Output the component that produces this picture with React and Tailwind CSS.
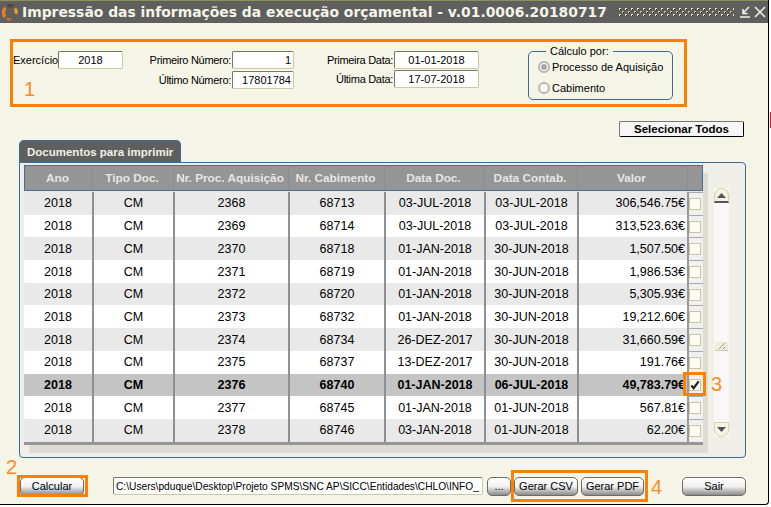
import React from "react";

const rows = [
  ["2018", "CM", "2368", "68713", "03-JUL-2018", "03-JUL-2018", "306,546.75€"],
  ["2018", "CM", "2369", "68714", "03-JUL-2018", "03-JUL-2018", "313,523.63€"],
  ["2018", "CM", "2370", "68718", "01-JAN-2018", "30-JUN-2018", "1,507.50€"],
  ["2018", "CM", "2371", "68719", "01-JAN-2018", "30-JUN-2018", "1,986.53€"],
  ["2018", "CM", "2372", "68720", "01-JAN-2018", "30-JUN-2018", "5,305.93€"],
  ["2018", "CM", "2373", "68732", "01-JAN-2018", "30-JUN-2018", "19,212.60€"],
  ["2018", "CM", "2374", "68734", "26-DEZ-2017", "30-JUN-2018", "31,660.59€"],
  ["2018", "CM", "2375", "68737", "13-DEZ-2017", "30-JUN-2018", "191.76€"],
  ["2018", "CM", "2376", "68740", "01-JAN-2018", "06-JUL-2018", "49,783.79€"],
  ["2018", "CM", "2377", "68745", "01-JAN-2018", "01-JUN-2018", "567.81€"],
  ["2018", "CM", "2378", "68746", "03-JAN-2018", "01-JUN-2018", "62.20€"],
];

const headers = ["Ano", "Tipo Doc.", "Nr. Proc. Aquisição", "Nr. Cabimento", "Data Doc.", "Data Contab.", "Valor", ""];

const gridCols = "grid grid-cols-[68px_81px_115px_96px_100px_93px_110px_16px]";

const Field = ({ value, className = "", align = "text-center", size = "text-[11px]" }) => (
  <div className={`h-[18px] bg-white border border-[#c9cba3] border-t-[#77775f] border-l-[#77775f] rounded-[2px] leading-[17px] px-[2px] text-black ${size} ${align} ${className}`}>
    {value}
  </div>
);

const Btn = ({ children, className = "" }) => (
  <button className={`h-[19px] rounded-[5px] border border-[#6b6b6b] bg-linear-to-b from-white via-[#f0f0f0] to-[#8c8c8c] text-[11px] leading-[17px] text-black ${className}`}>
    {children}
  </button>
);

const Radio = ({ on }) => (
  <span className="w-[12px] h-[12px] rounded-full border-2 border-[#b5b5b5] bg-white flex items-center justify-center shrink-0">
    {on && <span className="w-[6px] h-[6px] rounded-full bg-[#a8a8a8]" />}
  </span>
);

const Mark = ({ children, className = "" }) => (
  <span className={`absolute text-[#ff8a1e] text-[20px] leading-none font-light ${className}`}>{children}</span>
);

const Logo = () => (
  <svg width="16" height="18" viewBox="0 0 16 18" fill="none" className="shrink-0">
    <path d="M3 14 A6.5 6.5 0 0 1 3.5 5" stroke="#e8801f" strokeWidth="3.4" />
    <path d="M5.5 3 A6.5 6.5 0 0 1 11 3.2" stroke="#5a4030" strokeWidth="3" />
    <path d="M13 5.5 A6.5 6.5 0 0 1 14 11" stroke="#e8a020" strokeWidth="3" />
    <path d="M4.5 15.5 A6.5 6.5 0 0 0 9 16" stroke="#c87020" strokeWidth="2.4" />
  </svg>
);

const Grip = () => (
  <svg width="115" height="9" className="shrink-0">
    <defs>
      <pattern id="grip" width="6" height="6" patternUnits="userSpaceOnUse">
        <rect x="0" y="0" width="2" height="2" fill="#e8e8c0" />
        <rect x="3" y="3" width="2" height="2" fill="#c8c8a0" />
        <rect x="1" y="1" width="1" height="1" fill="#222" />
        <rect x="4" y="4" width="1" height="1" fill="#222" />
      </pattern>
    </defs>
    <rect width="115" height="9" fill="url(#grip)" />
  </svg>
);

const Check = ({ on }) => (
  <span className="w-[12px] h-[12px] border border-[#c8c8a0] bg-[#fbfbf3] flex items-center justify-center">
    {on && (
      <svg width="11" height="10" viewBox="0 0 11 10">
        <path d="M1.5 5.5 L4 8.5 L9.5 1" stroke="#222" strokeWidth="2.4" fill="none" />
      </svg>
    )}
  </span>
);

const Table = () => (
  <div className="w-[679px] self-start shadow-[5px_8px_0_0_#dcdcd3] bg-[#959595]">
    <div className={`${gridCols} h-[26px] bg-[#959595] border border-[#44709f]`}>
      {headers.map((h, i) => (
        <div
          key={i}
          className="flex items-center justify-center pr-[2px] pt-[1px] text-[11.8px] font-bold text-[#e6e6e6] whitespace-nowrap border-r border-[#7f8ea0] last:border-r-0"
        >
          {h}
        </div>
      ))}
    </div>
    <div className="h-[1px] bg-[#e8e8e0]" />
    {rows.map((row, i) => {
      const selected = i === 8;
      const bg = selected ? "bg-[#c4c4c4] font-bold" : i % 2 === 0 ? "bg-[#e9e9e9]" : "bg-white";
      return (
        <div key={row[2]} className={`${gridCols} h-[22.7px] ${bg} text-[12.5px] text-black`}>
          {row.map((cell, j) => (
            <div
              key={j}
              className={`flex items-center pt-[1px] border-l-2 border-[#8f8f98] first:border-l-0 ${j === 6 ? "justify-end pr-[2px]" : "justify-center"}`}
            >
              {cell}
            </div>
          ))}
          <div className="bg-[#f0f0f0] border-l-2 border-[#999] border-t border-t-[#aaa] flex items-center">
            <Check on={selected} />
          </div>
        </div>
      );
    })}
    <div className="h-[3px] bg-[#959595]" />
  </div>
);

const Scrollbar = () => (
  <div className="w-[15px] h-[249px] mt-[23px] ml-[11px] bg-[#f8f8f8] flex flex-col justify-between relative">
    <div className="h-[15px] rounded-t-full border border-b-2 border-[#d4d4ac] border-b-[#555] bg-[#f4f4e4] flex items-center justify-center">
      <svg width="9" height="5"><path d="M0 5 L4.5 0 L9 5 Z" fill="#555" /></svg>
    </div>
    <div className="absolute left-[1px] top-[154px] w-[13px] h-[9px] bg-[#eeeed8] border-b border-[#c8c8a0] flex items-center justify-center">
      <svg width="8" height="6"><path d="M1 6 L7 0 M5 6 L7 4" stroke="#999" /></svg>
    </div>
    <div className="h-[15px] rounded-b-full border border-[#d4d4ac] bg-[#f4f4e4] flex items-center justify-center">
      <svg width="9" height="5"><path d="M0 0 L4.5 5 L9 0 Z" fill="#555" /></svg>
    </div>
  </div>
);

export default function App() {
  return (
    <div className="relative w-[771px] h-[507px] bg-white overflow-hidden font-['Liberation_Sans',Arial,sans-serif]">
      <div className="w-[769px] h-[505px] bg-[#f5f5e7] border-r border-b border-black rounded-br-[4px] flex flex-col">
        {/* Title bar */}
        <div className="h-[23px] border-t border-[#8e8e5e] bg-[#5f5f5f] flex items-center pl-[2px] shrink-0">
          <Logo />
          <span className="ml-[4px] w-[587px] font-['DejaVu_Sans',sans-serif] font-bold text-[13.9px] text-[#f4f4e8] whitespace-nowrap">
            Impressão das informações da execução orçamental - v.01.0006.20180717
          </span>
          <div className="ml-[10px] flex items-center"><Grip /></div>
          <svg width="11" height="12" viewBox="0 0 11 12" className="ml-[6px]" stroke="#f4f4e8" strokeWidth="1.5" fill="none">
            <path d="M0 11 H10 M9 1 L3 7 M3 3 V7.5 H7.5" />
          </svg>
          <svg width="12" height="12" viewBox="0 0 12 12" className="ml-[3px]" stroke="#f4f4e8" strokeWidth="1.5" fill="none">
            <path d="M1 1 L11 11 M11 1 L1 11" />
          </svg>
        </div>

        {/* Filters */}
        <div className="flex items-start pl-[13px] pt-[28px] h-[98px] shrink-0 text-[11px] text-black">
          <div className="flex items-center w-[110px]">
            <span className="w-[45px] whitespace-nowrap">Exercício</span>
            <Field value="2018" className="w-[65px]" />
          </div>
          <div className="w-[171px] grid grid-cols-[109px_62px] gap-y-[2px] items-center tracking-[-0.3px]">
            <span className="text-right pr-[1px] whitespace-nowrap">Primeiro Número:</span>
            <Field value="1" align="text-right" className="tracking-normal" />
            <span className="text-right pr-[1px] whitespace-nowrap">Último Número:</span>
            <Field value="17801784" align="text-right" className="tracking-normal" />
          </div>
          <div className="w-[185px] grid grid-cols-[100px_85px] gap-y-[1px] items-center tracking-[-0.3px]">
            <span className="text-right pr-[1px] whitespace-nowrap">Primeira Data:</span>
            <Field value="01-01-2018" className="tracking-normal" />
            <span className="text-right pr-[1px] whitespace-nowrap">Última Data:</span>
            <Field value="17-07-2018" className="tracking-normal" />
          </div>
          <fieldset className="ml-[49px] -mt-[6px] w-[145px] h-[55px] border border-[#3b6a9a] rounded-[5px] pl-[9px]">
            <legend className="ml-[8px] px-[4px] leading-[12px]">Cálculo por:</legend>
            <div className="flex items-center gap-[2px] h-[16px] mt-[2px] whitespace-nowrap">
              <Radio on />
              <span>Processo de Aquisição</span>
            </div>
            <div className="flex items-center gap-[2px] h-[16px] mt-[5px] whitespace-nowrap">
              <Radio />
              <span>Cabimento</span>
            </div>
          </fieldset>
        </div>

        {/* Select all */}
        <div className="flex justify-end pr-[24px] h-[16px] shrink-0">
          <button className="w-[125px] h-[16px] bg-[#f6f6f6] border border-[#777] border-r-black border-b-black rounded-[2px] text-[11.5px] leading-[14px] font-bold text-black">
            Selecionar Todos
          </button>
        </div>

        {/* Tab panel */}
        <div className="pl-[19px] pt-[3px] shrink-0">
          <div className="w-[162px] h-[22px] bg-[#5f5f5f] border border-[#3b6a9a] border-b-0 rounded-t-[5px] text-[11.5px] font-bold text-[#f0f0e4] leading-[23px] pl-[7px] whitespace-nowrap">
            Documentos para imprimir
          </div>
          <div className="w-[727px] h-[296px] bg-[#efefe8] border border-[#3b6a9a] rounded-b-[4px] rounded-tr-[4px] pl-[4px] pt-[2px] flex">
            <Table />
            <Scrollbar />
          </div>
        </div>

        {/* Footer */}
        <div className="flex items-center pl-[20px] pt-[19px] shrink-0">
          <Btn className="w-[64px]">Calcular</Btn>
          <div className="ml-[29px] w-[370px] -mt-[1px]">
            <Field value="C:\Users\pduque\Desktop\Projeto SPMS\SNC AP\SICC\Entidades\CHLO\INFO_" align="text-left" size="text-[10.2px]" className="whitespace-nowrap overflow-hidden" />
          </div>
          <Btn className="ml-[4px] w-[24px]">...</Btn>
          <Btn className="ml-[3px] w-[64px]">Gerar CSV</Btn>
          <Btn className="ml-[3px] w-[63px]">Gerar PDF</Btn>
          <Btn className="ml-[38px] w-[64px]">Sair</Btn>
        </div>
      </div>

      {/* Annotations */}
      <div className="absolute left-[10px] top-[39px] w-[677px] h-[68px] border-[3px] border-[#ff8000] pointer-events-none" />
      <div className="absolute left-[17px] top-[475px] w-[71px] h-[22px] border-[3px] border-[#ff8000] pointer-events-none" />
      <div className="absolute left-[683px] top-[372px] w-[23px] h-[24px] border-[3px] border-[#ff8000] pointer-events-none" />
      <div className="absolute left-[511px] top-[470px] w-[137px] h-[32px] border-[3px] border-[#ff8000] pointer-events-none" />
      <Mark className="left-[24px] top-[79px]">1</Mark>
      <Mark className="left-[6px] top-[457px]">2</Mark>
      <Mark className="left-[711px] top-[374px]">3</Mark>
      <Mark className="left-[651px] top-[477px]">4</Mark>
      <div className="absolute left-[770px] top-[112px] w-[1px] h-[16px] bg-[#e02020]" />
    </div>
  );
}
